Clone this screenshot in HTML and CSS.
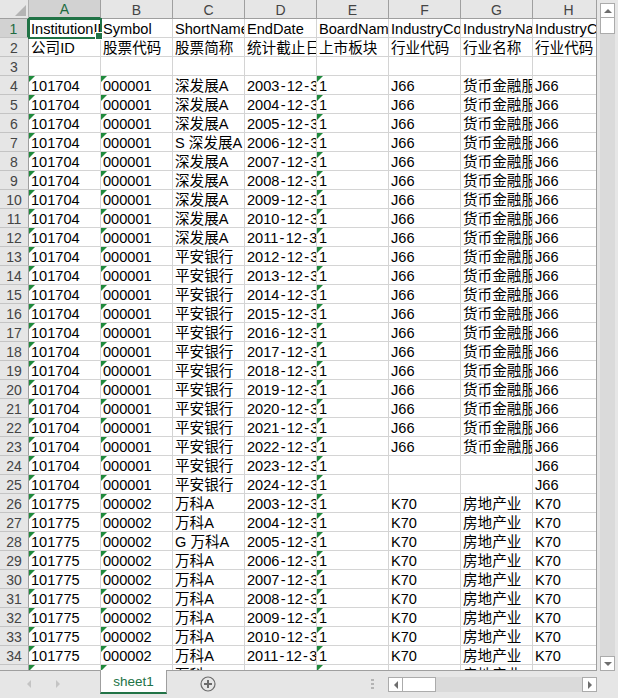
FILE: index.html
```html
<!DOCTYPE html>
<html lang="en">
  <head>
    <meta charset="UTF-8" />
    <title>sheet1</title>
    <link rel="stylesheet" href="styles.css">
  </head>
  <body>
    <div class="workbook">
      <div class="sheet">
        <table class="grid">
          <colgroup>
            <col class="col-row"><col class="col-cell"><col class="col-cell"><col class="col-cell"><col class="col-cell"><col class="col-cell"><col class="col-cell"><col class="col-cell"><col class="col-cell">
          </colgroup>
          <thead>
            <tr>
              <th class="corner"><span class="corner-mark"></span></th>
              <th class="active-col">A</th><th>B</th><th>C</th><th>D</th><th>E</th><th>F</th><th>G</th><th>H</th>
            </tr>
          </thead>
          <tbody>
            <tr><th class="active-row">1</th><td class="sel"><span class="sel-text">InstitutionID</span></td><td>Symbol</td><td>ShortName</td><td>EndDate</td><td>BoardName</td><td>IndustryCode</td><td>IndustryName</td><td>IndustryCode</td></tr>
            <tr><th>2</th><td>公司ID</td><td>股票代码</td><td>股票简称</td><td>统计截止日期</td><td>上市板块</td><td>行业代码</td><td>行业名称</td><td>行业代码</td></tr>
            <tr><th>3</th><td></td><td></td><td></td><td></td><td></td><td></td><td></td><td></td></tr>
            <tr><th>4</th><td class="flag">101704</td><td class="flag">000001</td><td>深发展A</td><td>2003<i>-</i>12<i>-</i>31</td><td class="flag">1</td><td>J66</td><td>货币金融服务</td><td>J66</td></tr>
            <tr><th>5</th><td class="flag">101704</td><td class="flag">000001</td><td>深发展A</td><td>2004<i>-</i>12<i>-</i>31</td><td class="flag">1</td><td>J66</td><td>货币金融服务</td><td>J66</td></tr>
            <tr><th>6</th><td class="flag">101704</td><td class="flag">000001</td><td>深发展A</td><td>2005<i>-</i>12<i>-</i>31</td><td class="flag">1</td><td>J66</td><td>货币金融服务</td><td>J66</td></tr>
            <tr><th>7</th><td class="flag">101704</td><td class="flag">000001</td><td>S 深发展A</td><td>2006<i>-</i>12<i>-</i>31</td><td class="flag">1</td><td>J66</td><td>货币金融服务</td><td>J66</td></tr>
            <tr><th>8</th><td class="flag">101704</td><td class="flag">000001</td><td>深发展A</td><td>2007<i>-</i>12<i>-</i>31</td><td class="flag">1</td><td>J66</td><td>货币金融服务</td><td>J66</td></tr>
            <tr><th>9</th><td class="flag">101704</td><td class="flag">000001</td><td>深发展A</td><td>2008<i>-</i>12<i>-</i>31</td><td class="flag">1</td><td>J66</td><td>货币金融服务</td><td>J66</td></tr>
            <tr><th>10</th><td class="flag">101704</td><td class="flag">000001</td><td>深发展A</td><td>2009<i>-</i>12<i>-</i>31</td><td class="flag">1</td><td>J66</td><td>货币金融服务</td><td>J66</td></tr>
            <tr><th>11</th><td class="flag">101704</td><td class="flag">000001</td><td>深发展A</td><td>2010<i>-</i>12<i>-</i>31</td><td class="flag">1</td><td>J66</td><td>货币金融服务</td><td>J66</td></tr>
            <tr><th>12</th><td class="flag">101704</td><td class="flag">000001</td><td>深发展A</td><td>2011<i>-</i>12<i>-</i>31</td><td class="flag">1</td><td>J66</td><td>货币金融服务</td><td>J66</td></tr>
            <tr><th>13</th><td class="flag">101704</td><td class="flag">000001</td><td>平安银行</td><td>2012<i>-</i>12<i>-</i>31</td><td class="flag">1</td><td>J66</td><td>货币金融服务</td><td>J66</td></tr>
            <tr><th>14</th><td class="flag">101704</td><td class="flag">000001</td><td>平安银行</td><td>2013<i>-</i>12<i>-</i>31</td><td class="flag">1</td><td>J66</td><td>货币金融服务</td><td>J66</td></tr>
            <tr><th>15</th><td class="flag">101704</td><td class="flag">000001</td><td>平安银行</td><td>2014<i>-</i>12<i>-</i>31</td><td class="flag">1</td><td>J66</td><td>货币金融服务</td><td>J66</td></tr>
            <tr><th>16</th><td class="flag">101704</td><td class="flag">000001</td><td>平安银行</td><td>2015<i>-</i>12<i>-</i>31</td><td class="flag">1</td><td>J66</td><td>货币金融服务</td><td>J66</td></tr>
            <tr><th>17</th><td class="flag">101704</td><td class="flag">000001</td><td>平安银行</td><td>2016<i>-</i>12<i>-</i>31</td><td class="flag">1</td><td>J66</td><td>货币金融服务</td><td>J66</td></tr>
            <tr><th>18</th><td class="flag">101704</td><td class="flag">000001</td><td>平安银行</td><td>2017<i>-</i>12<i>-</i>31</td><td class="flag">1</td><td>J66</td><td>货币金融服务</td><td>J66</td></tr>
            <tr><th>19</th><td class="flag">101704</td><td class="flag">000001</td><td>平安银行</td><td>2018<i>-</i>12<i>-</i>31</td><td class="flag">1</td><td>J66</td><td>货币金融服务</td><td>J66</td></tr>
            <tr><th>20</th><td class="flag">101704</td><td class="flag">000001</td><td>平安银行</td><td>2019<i>-</i>12<i>-</i>31</td><td class="flag">1</td><td>J66</td><td>货币金融服务</td><td>J66</td></tr>
            <tr><th>21</th><td class="flag">101704</td><td class="flag">000001</td><td>平安银行</td><td>2020<i>-</i>12<i>-</i>31</td><td class="flag">1</td><td>J66</td><td>货币金融服务</td><td>J66</td></tr>
            <tr><th>22</th><td class="flag">101704</td><td class="flag">000001</td><td>平安银行</td><td>2021<i>-</i>12<i>-</i>31</td><td class="flag">1</td><td>J66</td><td>货币金融服务</td><td>J66</td></tr>
            <tr><th>23</th><td class="flag">101704</td><td class="flag">000001</td><td>平安银行</td><td>2022<i>-</i>12<i>-</i>31</td><td class="flag">1</td><td>J66</td><td>货币金融服务</td><td>J66</td></tr>
            <tr><th>24</th><td class="flag">101704</td><td class="flag">000001</td><td>平安银行</td><td>2023<i>-</i>12<i>-</i>31</td><td class="flag">1</td><td></td><td></td><td>J66</td></tr>
            <tr><th>25</th><td class="flag">101704</td><td class="flag">000001</td><td>平安银行</td><td>2024<i>-</i>12<i>-</i>31</td><td class="flag">1</td><td></td><td></td><td>J66</td></tr>
            <tr><th>26</th><td class="flag">101775</td><td class="flag">000002</td><td>万科A</td><td>2003<i>-</i>12<i>-</i>31</td><td class="flag">1</td><td>K70</td><td>房地产业</td><td>K70</td></tr>
            <tr><th>27</th><td class="flag">101775</td><td class="flag">000002</td><td>万科A</td><td>2004<i>-</i>12<i>-</i>31</td><td class="flag">1</td><td>K70</td><td>房地产业</td><td>K70</td></tr>
            <tr><th>28</th><td class="flag">101775</td><td class="flag">000002</td><td>G 万科A</td><td>2005<i>-</i>12<i>-</i>31</td><td class="flag">1</td><td>K70</td><td>房地产业</td><td>K70</td></tr>
            <tr><th>29</th><td class="flag">101775</td><td class="flag">000002</td><td>万科A</td><td>2006<i>-</i>12<i>-</i>31</td><td class="flag">1</td><td>K70</td><td>房地产业</td><td>K70</td></tr>
            <tr><th>30</th><td class="flag">101775</td><td class="flag">000002</td><td>万科A</td><td>2007<i>-</i>12<i>-</i>31</td><td class="flag">1</td><td>K70</td><td>房地产业</td><td>K70</td></tr>
            <tr><th>31</th><td class="flag">101775</td><td class="flag">000002</td><td>万科A</td><td>2008<i>-</i>12<i>-</i>31</td><td class="flag">1</td><td>K70</td><td>房地产业</td><td>K70</td></tr>
            <tr><th>32</th><td class="flag">101775</td><td class="flag">000002</td><td>万科A</td><td>2009<i>-</i>12<i>-</i>31</td><td class="flag">1</td><td>K70</td><td>房地产业</td><td>K70</td></tr>
            <tr><th>33</th><td class="flag">101775</td><td class="flag">000002</td><td>万科A</td><td>2010<i>-</i>12<i>-</i>31</td><td class="flag">1</td><td>K70</td><td>房地产业</td><td>K70</td></tr>
            <tr><th>34</th><td class="flag">101775</td><td class="flag">000002</td><td>万科A</td><td>2011<i>-</i>12<i>-</i>31</td><td class="flag">1</td><td>K70</td><td>房地产业</td><td>K70</td></tr>
            <tr><th>35</th><td class="flag">101775</td><td class="flag">000002</td><td>万科A</td><td>2012<i>-</i>12<i>-</i>31</td><td class="flag">1</td><td>K70</td><td>房地产业</td><td>K70</td></tr>
          </tbody>
        </table>
      </div>
      <div class="vscroll">
        <div class="btn"><span class="arrow up"></span></div>
        <div class="btn thumb-v"></div>
        <div class="track"></div>
        <div class="btn"><span class="arrow down"></span></div>
      </div>
    </div>

    <div class="tabbar">
      <div class="tab-nav">
        <span class="nav-arrow left"></span>
        <span class="nav-arrow right"></span>
      </div>
      <div class="tab">sheet1</div>
      <svg class="add-sheet" width="16" height="16" viewBox="0 0 16 16">
        <circle cx="8" cy="8" r="7" fill="none" stroke="#6b6b6b" stroke-width="1.2"/>
        <path d="M8 4v8M4 8h8" stroke="#6b6b6b" stroke-width="2"/>
      </svg>
      <div class="grip"><span></span><span></span><span></span></div>
      <div class="hscroll">
        <div class="btn"><span class="arrow left"></span></div>
        <div class="btn thumb-h"></div>
        <div class="track"></div>
        <div class="btn"><span class="arrow right"></span></div>
      </div>
    </div>
  </body>
</html>
```

FILE: styles.css
```css
* {
  box-sizing: border-box;
}
html,
body {
  height: 100%;
}
body {
  display: flex;
  flex-direction: column;
  width: 618px;
  height: 698px;
  margin: 0;
  background: #e6e6e6;
  font-family: "Liberation Sans", "Noto Sans CJK SC", sans-serif;
  overflow: hidden;
}
.workbook {
  display: flex;
  height: 671px;
}
.sheet {
  width: 597px;
  height: 671px;
  overflow: hidden;
  border-right: 1px solid #9f9f9f;
  border-bottom: 1px solid #9f9f9f;
  background: #fff;
}
.grid {
  table-layout: fixed;
  border-collapse: separate;
  border-spacing: 0;
  width: 605px;
  font-size: 14.6px;
  color: #000;
}
.col-row {
  width: 29px;
}
.col-cell {
  width: 72px;
}
.grid thead th {
  height: 18px;
  padding: 1px 0 0;
  background: #e6e6e6;
  border-right: 1px solid #9f9f9f;
  border-bottom: 1px solid #9f9f9f;
  font-size: 14px;
  font-weight: normal;
  line-height: 16px;
  color: #444;
}
.grid thead th.corner {
  position: relative;
  border-right-color: #b0b0b0;
}
.corner-mark {
  position: absolute;
  right: 2px;
  bottom: 2px;
  width: 0;
  height: 0;
  border-style: solid;
  border-width: 0 0 11px 11px;
  border-color: transparent transparent #b4b4b4 transparent;
}
.grid thead th.active-col {
  background: #d2d2d2;
  border-bottom: 2px solid #217346;
  color: #1e6b41;
}
.grid tbody th {
  height: 19px;
  padding: 2px 0 0;
  background: #e6e6e6;
  border-right: 1px solid #9f9f9f;
  border-bottom: 1px solid #c4c4c4;
  font-size: 14px;
  font-weight: normal;
  line-height: 16px;
  color: #444;
}
.grid tbody th.active-row {
  background: #d2d2d2;
  border-right: 2px solid #217346;
  color: #1e6b41;
}
.grid td {
  position: relative;
  height: 19px;
  padding: 2px 0 0 2px;
  border-right: 1px solid #d4d4d4;
  border-bottom: 1px solid #d4d4d4;
  line-height: 16px;
  white-space: nowrap;
  overflow: hidden;
  vertical-align: bottom;
}
.grid td i {
  padding: 0 1.2px;
  font-style: normal;
}
.grid td.flag::before {
  content: "";
  position: absolute;
  top: 0;
  left: 0;
  border-style: solid;
  border-width: 6px 6px 0 0;
  border-color: #1f8a3c transparent transparent transparent;
}
.grid td.sel {
  overflow: visible;
  outline: 2px solid #217346;
  outline-offset: -1px;
  z-index: 1;
}
.grid td.sel::after {
  content: "";
  position: absolute;
  right: -3px;
  bottom: -3px;
  width: 6px;
  height: 6px;
  background: #217346;
  border: 1px solid #fff;
}
.sel-text {
  display: block;
  overflow: hidden;
}
.vscroll {
  display: flex;
  flex-direction: column;
  width: 21px;
  padding: 3px 3px 0;
}
.hscroll {
  display: flex;
  width: 209px;
  height: 15px;
  margin: 6px 0 0 14px;
}
.track {
  flex: 1;
  background: #dadada;
}
.btn {
  display: flex;
  justify-content: center;
  align-items: center;
  flex: none;
  width: 15px;
  height: 15px;
  background: #fff;
  border: 1px solid #ababab;
}
.thumb-v {
  height: 17px;
  margin-top: -1px;
}
.thumb-h {
  width: 34px;
  margin-left: -1px;
}
.arrow {
  width: 0;
  height: 0;
  border-style: solid;
}
.arrow.up {
  border-width: 0 4px 4px;
  border-color: transparent transparent #6e6e6e;
}
.arrow.down {
  border-width: 4px 4px 0;
  border-color: #6e6e6e transparent transparent;
}
.arrow.left {
  border-width: 4px 4px 4px 0;
  border-color: transparent #6e6e6e transparent transparent;
}
.arrow.right {
  border-width: 4px 0 4px 4px;
  border-color: transparent transparent transparent #6e6e6e;
}
.tabbar {
  display: flex;
  align-items: flex-start;
  flex: 1;
}
.tab-nav {
  display: flex;
  gap: 25px;
  width: 100px;
  padding: 9px 0 0 27px;
}
.nav-arrow {
  width: 0;
  height: 0;
  border-style: solid;
}
.nav-arrow.left {
  border-width: 4px 4px 4px 0;
  border-color: transparent #c4c4c4 transparent transparent;
}
.nav-arrow.right {
  border-width: 4px 0 4px 4px;
  border-color: transparent transparent transparent #c4c4c4;
}
.tab {
  width: 67px;
  height: 24px;
  margin-top: -1px;
  background: #fff;
  border-left: 1px solid #9f9f9f;
  border-right: 1px solid #9f9f9f;
  border-bottom: 2px solid #217346;
  font-size: 13.5px;
  line-height: 24px;
  text-align: center;
  color: #217346;
}
.add-sheet {
  margin: 5px 0 0 33px;
}
.grip {
  display: flex;
  flex-direction: column;
  gap: 2px;
  margin: 8px 0 0 155px;
}
.grip span {
  width: 3px;
  height: 2px;
  background: #b4b4b4;
}
```
